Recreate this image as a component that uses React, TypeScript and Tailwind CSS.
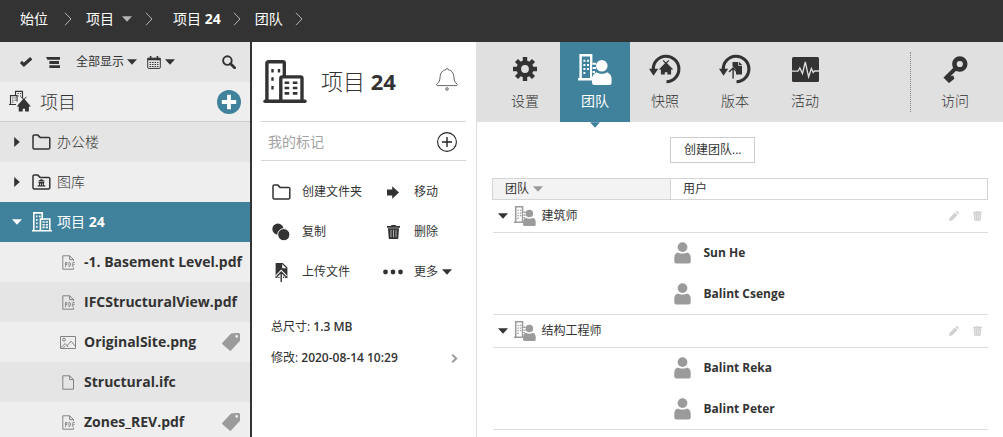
import type { ReactNode } from "react";
import clsx from "clsx";

type IconProps = { className?: string };

function Caret({ className }: IconProps) {
  return (
    <svg viewBox="0 0 10 6" className={clsx("shrink-0", className)} fill="currentColor">
      <path d="M0 0.2h10L5 5.8z" />
    </svg>
  );
}

function CrumbArrow() {
  return (
    <svg viewBox="0 0 8 14" className="h-3.5 w-2 shrink-0 text-[#b4b4b4]" fill="none" stroke="currentColor">
      <path d="M1 0.8l6 6.2-6 6.2" />
    </svg>
  );
}

function CheckIcon() {
  return (
    <svg viewBox="0 0 12 10" className="h-2.5 w-3" fill="none" stroke="currentColor" strokeWidth="3.2">
      <path d="M0.9 5l3 2.8L11.2 1.2" />
    </svg>
  );
}

function OutlineIcon() {
  return (
    <svg viewBox="0 0 14 11" className="h-[11px] w-3.5" fill="currentColor">
      <path d="M0 0h14v2.8H1.4zM3.4 4.1H13v2.8H3.4zM3.4 8.2H14V11H3.4z" />
    </svg>
  );
}

function CalendarIcon() {
  return (
    <svg viewBox="0 0 14 13" className="h-[13px] w-3.5" fill="none" stroke="currentColor">
      <path d="M0.7 2.2h12.6v9.2a1 1 0 0 1-1 1H1.7a1 1 0 0 1-1-1z" />
      <path d="M0.7 3.3h12.6" strokeWidth="2" />
      <path d="M3.6 0v3M10.4 0v3" strokeWidth="1.6" />
      <path d="M2.6 6.5h8.8M2.6 8.5h8.8M2.6 10.5h8.8" strokeDasharray="1.5 1" strokeWidth="1.1" />
    </svg>
  );
}

function SearchIcon() {
  return (
    <svg viewBox="0 0 14 14" className="size-3.5" fill="none" stroke="currentColor">
      <circle cx="5.4" cy="5.6" r="4.3" strokeWidth="1.9" />
      <path d="M8.6 8.8l4 3.9" strokeWidth="2.8" strokeLinecap="round" />
    </svg>
  );
}

function ProjectsIcon() {
  return (
    <svg viewBox="0 0 22 23" className="h-[23px] w-[22px] shrink-0" fill="none" stroke="currentColor">
      <path d="M6.5 6V1.4h7V8M0 14.5h7M1.5 14V5.6H8v6" strokeWidth="1.1" />
      <path
        d="M8.5 3.5h1.2M11 3.5h1.2M8.5 6h1.2M11 6h1.2M3.2 8h1.1M5.5 8h1.1M3.2 10.2h1.1M5.5 10.2h1.1M3.2 12.3h1.1"
        strokeWidth="1.1"
      />
      <path d="M12.2 6.8l4 4.4M17.4 6.8l-4 4.4" strokeWidth="1" />
      <path d="M14.8 8.2l7.1 8.4h-2v5h-3.8v-2.8h-2.4v2.8h-4v-5h-2z" fill="currentColor" stroke="none" />
    </svg>
  );
}

function PlusCircleSolid() {
  return (
    <svg viewBox="0 0 24 24" className="size-6">
      <circle cx="12" cy="12" r="12" fill="#40819c" />
      <path d="M12 4.8v14.4M4.8 12h14.4" stroke="#fff" strokeWidth="3.8" />
    </svg>
  );
}

function FolderIcon({ library }: { library?: boolean }) {
  return (
    <svg viewBox="0 0 19 16" className="h-4 w-[19px] shrink-0" fill="none" stroke="currentColor" strokeWidth="1.5">
      <path d="M1 13.7V2.3a1.2 1.2 0 0 1 1.2-1.2h3.6l2.3 2.3h8.5a1.2 1.2 0 0 1 1.2 1.2v9.1a1.2 1.2 0 0 1-1.2 1.2H2.2A1.2 1.2 0 0 1 1 13.7z" />
      {library && (
        <path
          d="M9.4 4.9l3.7 2.4H5.7zM6.6 7.8h5.6v1.8H6.6zM7 9.6h1.1v1.6H7zM8.9 9.6H10v1.6H8.9zM10.8 9.6h1.1v1.6h-1.1zM5.6 11.2h7.7v1.4H5.6z"
          fill="currentColor"
          stroke="none"
        />
      )}
    </svg>
  );
}

function BuildingsIcon({ className }: IconProps) {
  return (
    <svg viewBox="0 0 44 44" className={clsx("shrink-0", className)} fill="none" stroke="currentColor" strokeWidth="3.4">
      <path d="M3.9 40V3.2a1.5 1.5 0 0 1 1.5-1.5h14.4a1.5 1.5 0 0 1 1.5 1.5V16" />
      <path d="M17.8 40V18.4a1.5 1.5 0 0 1 1.5-1.5h18.2a1.5 1.5 0 0 1 1.5 1.5V40" />
      <path d="M2 41.2h40" strokeLinecap="round" />
      <path d="M9.5 9v3.4M16 9v3.4M9.5 17.3v3.4M9.5 26v3.4" strokeWidth="2.4" />
      <path
        d="M21.6 22.7h4.6M29.8 22.7h4.6M21.6 28h4.6M29.8 28h4.6M21.6 33.4h4.6M29.8 33.4h4.6"
        strokeWidth="2.6"
      />
    </svg>
  );
}

// heavier strokes than BuildingsIcon, for the tree
function BuildingsSmallIcon() {
  return (
    <svg viewBox="0 0 20 20" className="size-5 shrink-0" fill="none" stroke="currentColor" strokeWidth="1.6">
      <path d="M1.8 18.500V0.900h8.400V8M8.400 18.500V7h9.400v11.500M0 18.800h20" />
      <path d="M4 4.400h1.600M7 4.400h1.600M4 7.900h1.600M4 11.400h1.600M4 14.900h1.600" strokeWidth="1.8" />
      <path d="M10.5 10h5.400M10.500 12.700h5.400M10.500 15.400h5.400" strokeDasharray="2.2 1" strokeWidth="1.6" />
    </svg>
  );
}

function TeamIcon({ className }: IconProps) {
  return (
    <svg viewBox="0 0 34 31" className={clsx("shrink-0", className)} fill="none" stroke="currentColor">
      <path d="M2.6 26V1.3h10.6V11M0 25.3h14.5" strokeWidth="2.4" />
      <path d="M14.5 9.7H18M13 9.7v15.5M14.5 14h3.5M14.5 18h2.5" strokeWidth="2" />
      <path d="M5.4 6.7h2M9 6.7h2M5.4 11h2M9 11h2M5.4 15h2M9 15h2M5.4 19h2" strokeWidth="2" />
      <circle cx="23.8" cy="11.8" r="5.8" fill="currentColor" stroke="none" />
      <path
        d="M18.6 18.2c1.5 1 3.2 1.6 5.2 1.6s3.7-.6 5.2-1.6c2.8.8 4.6 3.5 4.6 6.5v3.8a2.5 2.5 0 0 1-2.5 2.5H16.5a2.5 2.5 0 0 1-2.5-2.5v-3.8c0-3 1.8-5.7 4.6-6.5z"
        fill="currentColor"
        stroke="none"
      />
    </svg>
  );
}

function UserIcon() {
  return (
    <svg viewBox="0 0 17 22" className="h-[22px] w-[17px] shrink-0 text-[#9b9b9b]" fill="currentColor">
      <circle cx="8.5" cy="5.1" r="4.9" />
      <path d="M4 10.4c1.3.8 2.8 1.2 4.5 1.2s3.2-.4 4.5-1.2c2.4.6 3.7 2.7 3.7 5v4.2a2 2 0 0 1-2 2H2.3a2 2 0 0 1-2-2v-4.2c0-2.3 1.3-4.4 3.7-5z" />
    </svg>
  );
}

function FileIcon({ kind }: { kind: string }) {
  if (kind === "png") {
    return (
      <svg viewBox="0 0 16 13" className="h-[13px] w-4" fill="none" stroke="currentColor" strokeWidth="0.9">
        <path d="M0.5 0.5h15v12H0.5z" />
        <circle cx="4" cy="3.7" r="1.4" />
        <path d="M1 11.5l4.2-4 3 3.6M7 9.8l4-4.6 4.3 5M3 12.2l2.4-2.4" />
      </svg>
    );
  }
  return (
    <svg viewBox="0 0 13 15" className="h-[15px] w-[13px]" fill="none" stroke="currentColor" strokeWidth="0.9">
      {kind === "pdf" ? (
        <>
          <path d="M11.5 6V4.6L7.6 0.8H0.8v13.4h10.7v-1.6" />
          <path d="M7.6 0.8v3.8h3.9" />
          <path d="M3.5 12V7.5h1.4v2H3.5M6.9 7.5v4h.8l.9-.9V8.4l-.9-.9zM10.8 12V7.5h2M10.8 9.6h1.8" strokeWidth="0.8" />
        </>
      ) : (
        <>
          <path d="M11.5 14.2V4.6L7.6 0.8H0.8v13.4z" />
          <path d="M7.6 0.8v3.8h3.9" />
        </>
      )}
    </svg>
  );
}

function TagIcon() {
  return (
    <svg viewBox="0 0 18 18" className="size-[18px] shrink-0 text-[#9b9b9b]" fill="currentColor">
      <path
        fillRule="evenodd"
        d="M10.2.2l6.3-.1c1 0 1.5.6 1.5 1.5v5.3c0 .7-.2 1.2-.7 1.7l-8.2 8.8c-.5.5-1 .5-1.5 0L.4 11.2c-.5-.5-.5-1 0-1.5L8.6.9c.5-.5.9-.7 1.6-.7zM14.7 2a1.4 1.4 0 1 0 0 2.8 1.4 1.4 0 0 0 0-2.8z"
      />
    </svg>
  );
}

function BellIcon() {
  return (
    <svg viewBox="0 0 22 23" className="h-[23px] w-[22px]" fill="none" stroke="currentColor" strokeWidth="0.9">
      <path d="M9.9 1.6a1.1 1.1 0 0 1 2.2 0c3.8.7 5.5 3.5 5.8 7 .3 3.7.6 5.8 3.1 7.3.6.5.4 1.7-.4 1.7H1.4c-.8 0-1-1.2-.4-1.7 2.5-1.5 2.8-3.6 3.1-7.3.3-3.5 2-6.3 5.8-7z" />
      <circle cx="11" cy="21" r="1.3" />
    </svg>
  );
}

function PlusCircle() {
  return (
    <svg viewBox="0 0 20 20" className="size-5" fill="none" stroke="#222">
      <circle cx="10" cy="10" r="9.4" strokeWidth="1.1" />
      <path d="M10 5v10M5 10h10" strokeWidth="1.4" />
    </svg>
  );
}

function MoveIcon() {
  return (
    <svg viewBox="0 0 12 13" className="h-[13px] w-3" fill="currentColor">
      <path d="M0 3.4h5.2V0.2L12 6.5l-6.8 6.3V9.6H0z" />
    </svg>
  );
}

function CopyIcon() {
  return (
    <svg viewBox="0 0 18 18" className="size-[18px]" fill="currentColor">
      <circle cx="5.9" cy="6.1" r="5.6" />
      <circle cx="11.8" cy="11.7" r="6.1" stroke="#fff" strokeWidth="1" />
    </svg>
  );
}

function TrashIcon({ className }: IconProps) {
  return (
    <svg viewBox="0 0 13 14" className={className} fill="currentColor">
      <path
        fillRule="evenodd"
        d="M4.2 0h4.6v1H13v1.700H0V1h4.200zM1 3.200h11l-.7 9.600c0 .8-.4 1.200-1.100 1.200H2.800c-.7 0-1.100-.4-1.100-1.200zM3.700 4.800v7.400h.6V4.800zM6.200 4.800v7.400h.6V4.800zM8.700 4.800v7.400h.6V4.800z"
      />
    </svg>
  );
}

function UploadIcon() {
  return (
    <svg viewBox="0 0 13 19" className="h-[19px] w-[13px]">
      <path d="M0.6 0h7.2l4.6 4.6V15H.6z" fill="currentColor" />
      <path d="M7.2 1v4.200h4.200z" fill="#fff" />
      <path d="M6.2 19V9.500M1.600 13.700L6.200 9l4.600 4.700" stroke="#fff" strokeWidth="3.4" fill="none" />
      <path d="M6.2 19V9.500M1.600 13.700L6.200 9l4.600 4.700" stroke="currentColor" strokeWidth="1.4" fill="none" />
    </svg>
  );
}

function MoreIcon() {
  return (
    <svg viewBox="0 0 20 6" className="h-1.5 w-5" fill="currentColor">
      <circle cx="2.5" cy="3" r="2.4" />
      <circle cx="10" cy="3" r="2.4" />
      <circle cx="17.5" cy="3" r="2.4" />
    </svg>
  );
}

function GearIcon() {
  return (
    <svg viewBox="0 0 24 24" className="size-6" fill="none" stroke="currentColor">
      <circle cx="12" cy="12" r="6.2" strokeWidth="4.6" />
      <path
        d="M12 0v4.5M12 19.5V24M0 12h4.5M19.5 12H24M3.5 3.5l3.2 3.2M17.3 17.3l3.2 3.2M20.5 3.5l-3.2 3.2M6.7 17.3l-3.2 3.2"
        strokeWidth="4.4"
      />
    </svg>
  );
}

function RestoreIcon({ children }: { children: ReactNode }) {
  return (
    <svg viewBox="0 0 32 30" className="h-[30px] w-8" fill="none" stroke="currentColor">
      <path d="M4.3 15.5A12.8 12.8 0 1 1 17.5 27.8" strokeWidth="3.1" />
      <path d="M0 14.8h9.2L4.5 21.8z" fill="currentColor" stroke="none" />
      {children}
    </svg>
  );
}

function SnapshotIcon() {
  return (
    <RestoreIcon>
      <path d="M14.2 6.5l4.6 4.6M19.8 6.5l-4.6 4.6" strokeWidth="1.1" />
      <path d="M17 8.2l7.3 7.4h-2.200v5h-3.700v-2.400h-2.600v2.400h-3.900v-5H9.700z" fill="currentColor" stroke="none" />
    </RestoreIcon>
  );
}

function VersionIcon() {
  return (
    <RestoreIcon>
      <path d="M13.5 8h5.7v3.800H23V20.500h-6v-5l-3.500-3.300z" fill="currentColor" stroke="none" />
      <path d="M20 7.7l3.2 3.200H20z" fill="currentColor" stroke="none" />
      <path d="M14.1 24.5v-10M10 18l4.100-4 4.100 4" strokeWidth="1.4" />
    </RestoreIcon>
  );
}

function ActivityIcon() {
  return (
    <svg viewBox="0 0 27 25" className="h-[25px] w-[27px]">
      <rect width="27" height="25" rx="1.5" fill="currentColor" />
      <path
        d="M0 14.2h6l1.800-3.200 2.700 5.500L13.300 5l3.300 14.800 2.800-8.300 1.800 4 1.200-1.500H27"
        fill="none"
        stroke="#e0e0e0"
        strokeWidth="1.3"
      />
    </svg>
  );
}

function KeyIcon() {
  return (
    <svg viewBox="0 0 25 27" className="h-[27px] w-[25px]" fill="none" stroke="currentColor">
      <circle cx="16.8" cy="8" r="5.4" strokeWidth="4.6" />
      <path d="M13 12L3.8 21.2" strokeWidth="4" />
      <path d="M4.8 18l3 2.3 2.4-.8 1.200 3.300-5.400 4.300L0.400 21.600z" fill="currentColor" stroke="none" />
    </svg>
  );
}

function PencilIcon() {
  return (
    <svg viewBox="0 0 10 10" className="size-2.5" fill="currentColor">
      <path d="M0 10l.5-3L6 1.5 8.5 4 3 9.500zM6.700.8l.5-.5c.4-.4.9-.4 1.300 0l1.200 1.200c.4.4.4.9 0 1.300l-.5.5z" />
    </svg>
  );
}

const files = [
  { name: "-1. Basement Level.pdf", kind: "pdf", tagged: false },
  { name: "IFCStructuralView.pdf", kind: "pdf", tagged: false },
  { name: "OriginalSite.png", kind: "png", tagged: true },
  { name: "Structural.ifc", kind: "ifc", tagged: false },
  { name: "Zones_REV.pdf", kind: "pdf", tagged: true },
];

const actions = [
  { label: "创建文件夹", icon: <FolderIcon /> },
  { label: "移动", icon: <MoveIcon /> },
  { label: "复制", icon: <CopyIcon /> },
  { label: "删除", icon: <TrashIcon className="h-3.5 w-[13px]" /> },
  { label: "上传文件", icon: <UploadIcon /> },
  { label: "更多", icon: <MoreIcon />, menu: true },
];

const tabs = [
  { label: "设置", icon: <GearIcon /> },
  { label: "团队", icon: <TeamIcon className="h-[31px] w-[34px]" />, active: true },
  { label: "快照", icon: <SnapshotIcon /> },
  { label: "版本", icon: <VersionIcon /> },
  { label: "活动", icon: <ActivityIcon /> },
];

const teams = [
  { name: "建筑师", users: ["Sun He", "Balint Csenge"] },
  { name: "结构工程师", users: ["Balint Reka", "Balint Peter"] },
];

function Breadcrumbs() {
  return (
    <header className="flex h-[42px] shrink-0 items-center bg-[#333] px-5 pb-1 text-sm text-white">
      <a href="#home">始位</a>
      <span className="pr-3.5 pl-4">
        <CrumbArrow />
      </span>
      <a href="#projects">项目</a>
      <button type="button" aria-label="项目列表" className="px-2 text-[#b4b4b4]">
        <Caret className="h-1.5 w-2.5" />
      </button>
      <span className="pr-5 pl-[5px]">
        <CrumbArrow />
      </span>
      <a href="#project-24">
        项目 <b>24</b>
      </a>
      <span className="pr-3.5 pl-3">
        <CrumbArrow />
      </span>
      <a href="#teams">团队</a>
      <span className="px-3">
        <CrumbArrow />
      </span>
    </header>
  );
}

function Sidebar() {
  return (
    <aside className="flex w-[252px] shrink-0 flex-col overflow-hidden border-r-2 border-[#333] bg-[#eee]">
      <div className="flex h-10 shrink-0 items-center bg-[#e5e5e5] pr-3.5 pl-5 text-xs">
        <button type="button" aria-label="选择" className="mr-3.5">
          <CheckIcon />
        </button>
        <button type="button" aria-label="列表" className="mr-4">
          <OutlineIcon />
        </button>
        <label className="mr-2.5 flex items-center gap-0.5">
          <select aria-label="显示" className="appearance-none outline-none">
            <option>全部显示</option>
          </select>
          <Caret className="h-1.5 w-2.5" />
        </label>
        <button type="button" aria-label="日期" className="flex items-center gap-1">
          <CalendarIcon />
          <Caret className="h-1.5 w-2.5" />
        </button>
        <button type="button" aria-label="搜索" className="ml-auto">
          <SearchIcon />
        </button>
      </div>

      <div className="flex h-10 shrink-0 items-center border-b border-[#ccc] px-[9px]">
        <ProjectsIcon />
        <h2 className="ml-[9px] text-lg font-light">项目</h2>
        <button type="button" aria-label="新建项目" className="ml-auto">
          <PlusCircleSolid />
        </button>
      </div>

      <ul className="text-sm">
        <li className="flex h-10 items-center bg-[#e5e5e5] pl-3">
          <Caret className="mr-2.5 h-1.5 w-2.5 -rotate-90" />
          <FolderIcon />
          <span className="ml-1.5 font-light">办公楼</span>
        </li>
        <li className="flex h-10 items-center bg-[#eee] pl-3">
          <Caret className="mr-2.5 h-1.5 w-2.5 -rotate-90" />
          <FolderIcon library />
          <span className="ml-1.5 font-light">图库</span>
        </li>
        <li className="flex h-10 items-center bg-[#40819c] pl-3 text-white">
          <Caret className="mr-2.5 h-1.5 w-2.5" />
          <BuildingsSmallIcon />
          <span className="ml-[5px]">
            项目 <b>24</b>
          </span>
        </li>
        {files.map((file) => (
          <li key={file.name} className="flex h-10 items-center pr-2.5 pl-15 odd:bg-[#e5e5e5]">
            <span className="flex w-4 shrink-0 justify-center text-[#777]">
              <FileIcon kind={file.kind} />
            </span>
            <span className="ml-2 font-bold whitespace-nowrap">{file.name}</span>
            {file.tagged && (
              <span className="ml-auto">
                <TagIcon />
              </span>
            )}
          </li>
        ))}
      </ul>
    </aside>
  );
}

function ProjectPanel() {
  return (
    <section className="w-56 shrink-0 overflow-hidden pr-2.5 pl-[9px] text-xs">
      <div className="flex h-20 items-center border-b border-[#d5d5d5] pr-2 pl-0.5">
        <BuildingsIcon className="size-11" />
        <h1 className="ml-3.5 text-[22px] font-light">
          项目 <span className="font-bold">24</span>
        </h1>
        <button type="button" aria-label="通知" className="ml-auto pb-1 text-[#555]">
          <BellIcon />
        </button>
      </div>
      <div className="flex h-[39px] items-center border-b border-[#d5d5d5] pt-px pr-[9px] pl-[7px]">
        <input
          aria-label="我的标记"
          placeholder="我的标记"
          className="min-w-0 flex-1 text-sm outline-none placeholder:text-[#a3a3a3]"
        />
        <button type="button" aria-label="添加标记">
          <PlusCircle />
        </button>
      </div>

      <div className="grid grid-cols-[112px_1fr] pt-[11px] pl-2.5">
        {actions.map((action) => (
          <button key={action.label} type="button" className="flex h-10 items-center">
            <span className="flex w-5 shrink-0 justify-center">{action.icon}</span>
            <span className="ml-[11px]">{action.label}</span>
            {action.menu && <Caret className="ml-1 h-1.5 w-2.5" />}
          </button>
        ))}
      </div>

      <div className="flex flex-col gap-[11px] pt-[25px] pr-2 pl-2.5">
        <p className="leading-5">
          总尺寸: <span className="font-semibold">1.3 MB</span>
        </p>
        <div className="flex items-center justify-between leading-5">
          <p>
            修改: <span className="font-semibold">2020-08-14 10:29</span>
          </p>
          <button type="button" aria-label="修改记录">
            <svg
              viewBox="0 0 7 9"
              className="h-[9px] w-[7px] text-[#9b9b9b]"
              fill="none"
              stroke="currentColor"
              strokeWidth="2"
            >
              <path d="M1.2 0.8l4 3.7-4 3.7" />
            </svg>
          </button>
        </div>
      </div>
    </section>
  );
}

function TabButton({ label, icon, active }: { label: string; icon: ReactNode; active?: boolean }) {
  return (
    <button
      type="button"
      className={clsx(
        "relative flex h-full w-[70px] flex-col items-center pt-[9px]",
        active ? "bg-[#40819c] text-white" : "font-light",
      )}
    >
      <span className="flex h-9 items-center">{icon}</span>
      <span className="mt-1 leading-5">{label}</span>
      {active && <Caret className="absolute top-full left-1/2 h-1.5 w-3 -translate-x-1/2 text-[#40819c]" />}
    </button>
  );
}

function TeamTable() {
  return (
    <table className="w-full table-fixed border-collapse text-left text-xs">
      <thead>
        <tr className="h-[21px]">
          <th className="w-[178px] border border-[#d5d5d5] bg-[#f3f3f3] pl-3 font-normal">
            <button type="button" className="flex items-center gap-1">
              团队 <Caret className="h-1.5 w-2.5 text-[#9b9b9b]" />
            </button>
          </th>
          <th className="border border-[#d5d5d5] pl-3 font-normal">用户</th>
        </tr>
      </thead>
      {teams.map((team) => (
        <tbody key={team.name} className="border-b border-[#ddd]">
          <tr className="h-[33px] border-b border-[#ddd]">
            <th colSpan={2} className="pr-1.5 pl-[5px] font-normal">
              <div className="flex items-center">
                <button type="button" aria-label="展开" className="mr-1.5">
                  <Caret className="h-1.5 w-2.5" />
                </button>
                <TeamIcon className="h-5 w-[22px] text-[#9b9b9b]" />
                <span className="ml-1.5">{team.name}</span>
                <span className="ml-auto flex items-center gap-3.5 text-[#d0d0d0]">
                  <button type="button" aria-label="编辑">
                    <PencilIcon />
                  </button>
                  <button type="button" aria-label="删除">
                    <TrashIcon className="h-2.5 w-[9px]" />
                  </button>
                </span>
              </div>
            </th>
          </tr>
          {team.users.map((user) => (
            <tr key={user} className="h-[41px]">
              <td />
              <td className="pl-[3px] font-bold">
                <div className="flex items-center gap-[13px]">
                  <UserIcon />
                  {user}
                </div>
              </td>
            </tr>
          ))}
        </tbody>
      ))}
    </table>
  );
}

export default function App() {
  return (
    <div className="flex h-screen flex-col overflow-hidden bg-white font-['Open_Sans','Noto_Sans_CJK_SC',sans-serif] text-[#333]">
      <Breadcrumbs />
      <div className="flex min-h-0 flex-1">
        <Sidebar />
        <ProjectPanel />
        <main className="flex min-w-0 flex-1 flex-col">
          <nav className="flex h-20 shrink-0 items-center bg-[#e0e0e0] pr-[13px] pl-3.5 text-sm">
            {tabs.map((tab) => (
              <TabButton key={tab.label} {...tab} />
            ))}
            <span className="ml-auto h-15 border-l border-dotted border-[#888] pl-[9px]" />
            <TabButton label="访问" icon={<KeyIcon />} />
          </nav>
          <div className="flex-1 border-l border-[#ddd] px-[15px] pt-[15px]">
            <button type="button" className="mb-[15px] ml-[178px] block h-[26px] border border-[#ccc] px-[13px] text-xs">
              创建团队...
            </button>
            <TeamTable />
          </div>
        </main>
      </div>
    </div>
  );
}
